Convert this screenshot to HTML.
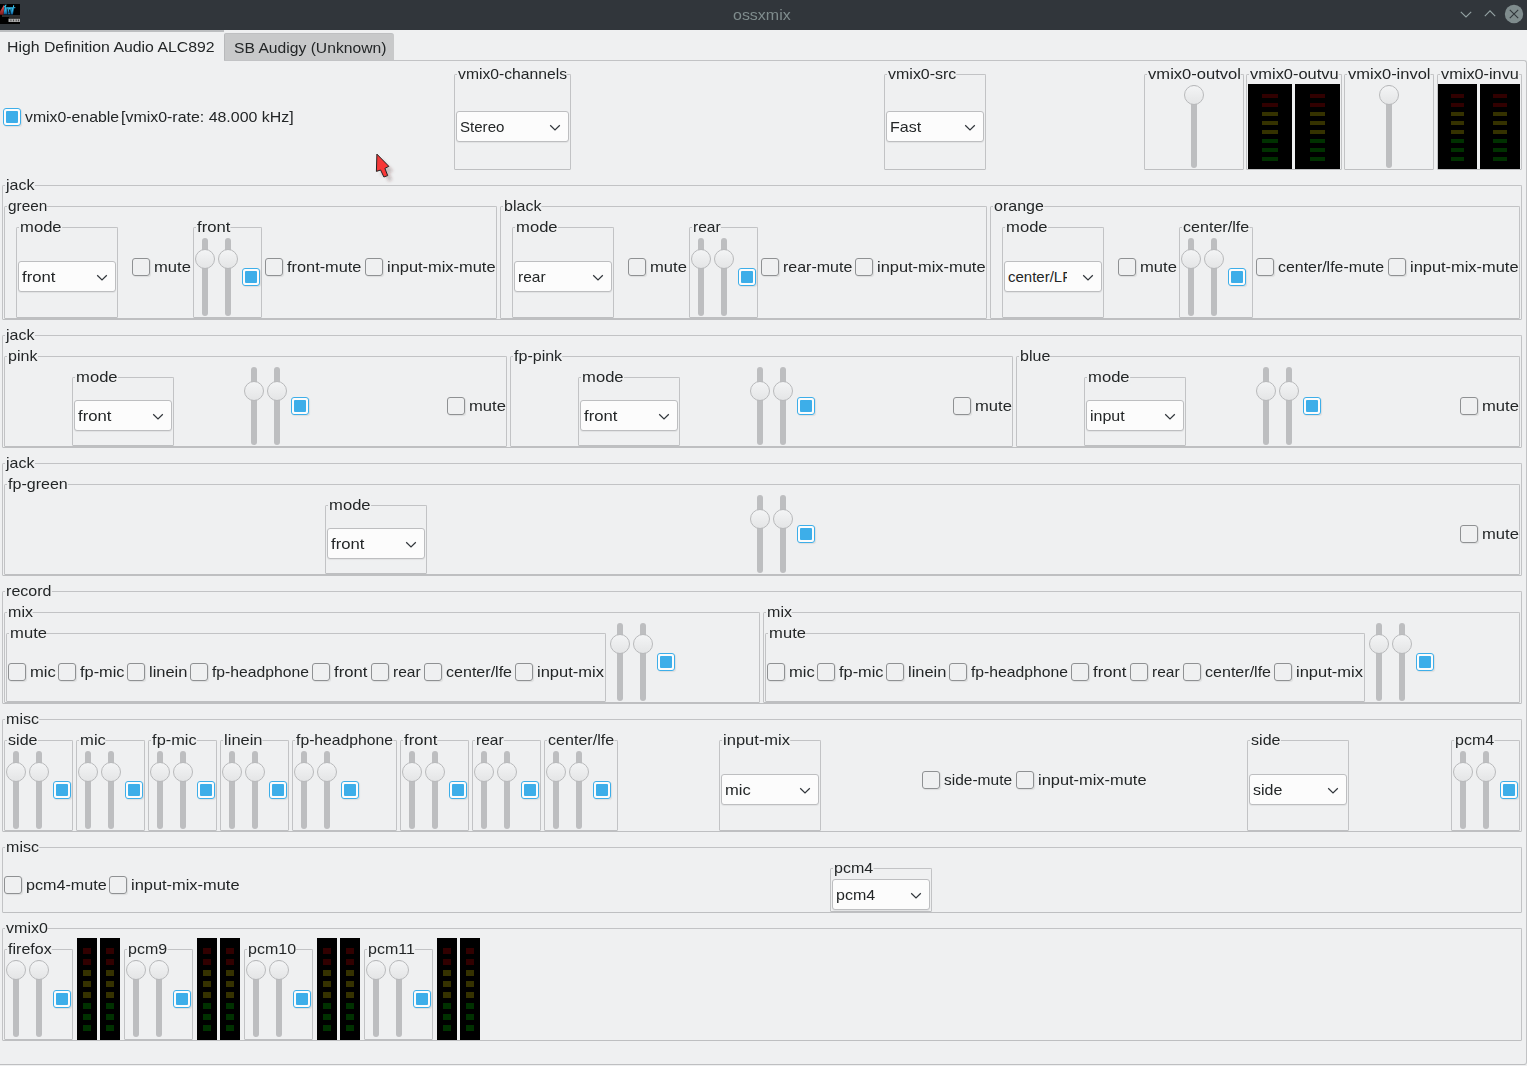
<!DOCTYPE html><html><head><meta charset="utf-8"><style>
*{margin:0;padding:0;box-sizing:border-box}
html,body{width:1527px;height:1066px;overflow:hidden;background:#eff0f1}
body{position:relative;font-family:"Liberation Sans",sans-serif;font-size:16px;color:#232627}
.t,.ft{position:absolute;white-space:nowrap;line-height:16px;height:16px;font-size:15px;transform-origin:0 0}
.ft{background:#eff0f1;padding:0 0 0 1px}
.fr{position:absolute;border:1px solid #c2c3c5;border-bottom-color:#bebfc1;border-radius:1.5px}
.cb{position:absolute;width:18px;height:18px;border:1px solid #8f9193;border-radius:3px;box-shadow:1px 1px 1px rgba(0,0,0,0.08)}
.cbc{position:absolute;width:18px;height:18px;border:1px solid #3daee9;border-radius:3px;background:#fcfcfc;box-shadow:1px 1px 1px rgba(0,0,0,0.08)}
.cbc:after{content:"";position:absolute;left:2px;top:2px;width:12px;height:12px;background:#3daee9;border-radius:1px}
.co{position:absolute;border:1px solid #bdbec0;border-radius:3px;background:#fcfcfc;box-shadow:0 1px 1px rgba(0,0,0,0.06)}
.chev{position:absolute}
.gr{position:absolute;width:6px;background:#bdbec0;border-radius:3px}
.hd{position:absolute;width:20px;height:20px;border-radius:50%;border:1px solid #b9babc;background:linear-gradient(#f3f4f5,#e4e5e6)}
.vu{position:absolute;background:#000}
.vu i{position:absolute;display:block}
</style></head><body><div style="position:absolute;left:0;top:0;width:1527px;height:30px;background:#31363b"></div>
<svg style="position:absolute;left:0;top:4px" width="20" height="20" viewBox="0 0 20 20"><defs><linearGradient id="bl" x1="0" y1="0" x2="0" y2="1"><stop offset="0" stop-color="#3cd0f8"/><stop offset="0.6" stop-color="#2aa8e0"/><stop offset="1" stop-color="#0a4a80"/></linearGradient><linearGradient id="rd" x1="0" y1="0" x2="0" y2="1"><stop offset="0" stop-color="#f06060"/><stop offset="1" stop-color="#801818"/></linearGradient></defs><rect x="0" y="0" width="20" height="20" fill="#000"/><path d="M0 7.5 L4.2 0.4 L3.6 10.8 L0 10.8 Z" fill="url(#rd)"/><g transform="translate(1.6 0) scale(0.74 1) skewX(-10)"><path d="M4.6 10.6 L4.6 3.2 L3.8 3.2 L3.8 1.8 L4.7 1.8 Q5 0.4 6.6 0.5 L6.6 1.9 Q6.1 1.9 6.1 2.5 L6.1 3.2 L7.6 3.2 L7.6 10.6 Z" fill="url(#bl)"/><path d="M7.6 10.6 L7.6 3.2 L15.8 3.2 L15.8 1.2 L17.2 1.2 L17.2 10.6 Z" fill="url(#bl)"/><rect x="8.9" y="4.6" width="0.9" height="6" fill="#000"/><rect x="11.1" y="5.4" width="1.2" height="3.6" fill="#000"/><rect x="13.3" y="4.6" width="0.8" height="6" fill="#000"/><rect x="17.2" y="3.2" width="2" height="1.3" fill="url(#bl)"/></g><rect x="2" y="11.5" width="18" height="1" fill="#5a5a5a"/><rect x="8.5" y="14.6" width="11.5" height="3.4" fill="#a8a8a8"/><rect x="10.6" y="15.5" width="0.7" height="1.8" fill="#222"/><rect x="13.2" y="15.5" width="0.7" height="1.8" fill="#222"/><rect x="15.8" y="15.5" width="0.7" height="1.8" fill="#222"/><rect x="18.2" y="15.5" width="0.7" height="1.8" fill="#222"/><rect x="9" y="13.2" width="11" height="1" fill="#333"/></svg>
<div class="t" style="left:733px;top:7px;transform:scaleX(1.0648);color:#7f8c8d;">ossxmix</div>
<svg style="position:absolute;left:1458px;top:8px" width="16" height="12" viewBox="0 0 16 12"><path d="M2.8 3.9 L8 8.9 L13.2 3.9" fill="none" stroke="#95a3a4" stroke-width="1.1"/></svg>
<svg style="position:absolute;left:1482px;top:7px" width="16" height="12" viewBox="0 0 16 12"><path d="M2.8 9.2 L8 3.9 L13.2 9.2" fill="none" stroke="#95a3a4" stroke-width="1.1"/></svg>
<svg style="position:absolute;left:1504px;top:4px" width="20" height="20" viewBox="0 0 20 20"><circle cx="10" cy="10" r="9.2" fill="#7f8c8d"/><path d="M5.8 5.8 L14.2 14.2 M14.2 5.8 L5.8 14.2" stroke="#31363b" stroke-width="1.1"/></svg>
<div style="position:absolute;left:0;top:30px;width:224px;height:2px;background:#bcbec0"></div>
<div style="position:absolute;left:224px;top:33px;width:170px;height:27px;background:#c8c9ca;border-left:1px solid #b8b9bb;border-top:1px solid #bfc0c2;border-radius:2px 3px 0 0"></div>
<div class="t" style="left:7px;top:39px;transform:scaleX(1.0546);">High Definition Audio ALC892</div>
<div class="t" style="left:234px;top:40px;transform:scaleX(1.0444);">SB Audigy (Unknown)</div>
<div style="position:absolute;left:0;top:60px;width:1527px;height:1005px;border:1px solid #c2c3c5;border-left:0;border-bottom-color:#bebfc1;border-radius:0 3px 3px 0"></div>
<div style="position:absolute;left:0;top:60px;width:224px;height:1px;background:#eff0f1"></div>
<div class="cbc" style="left:3px;top:108px"></div>
<div class="t" style="left:25px;top:109px;transform:scaleX(1.0539);">vmix0-enable</div>
<div class="t" style="left:121px;top:109px;transform:scaleX(1.0621);">[vmix0-rate: 48.000 kHz]</div>
<div class="fr" style="left:454px;top:74px;width:117px;height:96px"></div>
<div class="ft" style="left:457px;top:66px;transform:scaleX(1.0452)">vmix0-channels</div>
<div class="co" style="left:456px;top:111px;width:113px;height:31px"></div>
<div class="t" style="left:460px;top:119px;transform:scaleX(1.0047);">Stereo</div>
<svg class="chev" style="left:549px;top:124px" width="12" height="8" viewBox="0 0 12 8"><path d="M1.2 1.3 L6 6 L10.8 1.3" fill="none" stroke="#31363b" stroke-width="1.25"/></svg>
<div class="fr" style="left:884px;top:74px;width:102px;height:96px"></div>
<div class="ft" style="left:887px;top:66px;transform:scaleX(1.0641)">vmix0-src</div>
<div class="co" style="left:886px;top:111px;width:98px;height:31px"></div>
<div class="t" style="left:890px;top:119px;transform:scaleX(1.0670);">Fast</div>
<svg class="chev" style="left:964px;top:124px" width="12" height="8" viewBox="0 0 12 8"><path d="M1.2 1.3 L6 6 L10.8 1.3" fill="none" stroke="#31363b" stroke-width="1.25"/></svg>
<div class="fr" style="left:1144px;top:74px;width:100px;height:96px"></div>
<div class="ft" style="left:1147px;top:66px;transform:scaleX(1.1024)">vmix0-outvol</div>
<div class="gr" style="left:1191px;top:85px;height:83px"></div>
<div class="hd" style="left:1184px;top:85px"></div>
<div class="fr" style="left:1246px;top:74px;width:96px;height:96px"></div>
<div class="ft" style="left:1249px;top:66px;transform:scaleX(1.0950)">vmix0-outvu</div>
<div class="vu" style="left:1248px;top:84px;width:44px;height:85px">
<i style="left:14px;top:10px;width:16px;height:4px;background:#310000"></i>
<i style="left:14px;top:19px;width:16px;height:4px;background:#310000"></i>
<i style="left:14px;top:28px;width:16px;height:4px;background:#353200"></i>
<i style="left:14px;top:37px;width:16px;height:4px;background:#353200"></i>
<i style="left:14px;top:46px;width:16px;height:4px;background:#353200"></i>
<i style="left:14px;top:55px;width:16px;height:4px;background:#003100"></i>
<i style="left:14px;top:64px;width:16px;height:4px;background:#003100"></i>
<i style="left:14px;top:73px;width:16px;height:4px;background:#003100"></i>
</div>
<div class="vu" style="left:1295px;top:84px;width:45px;height:85px">
<i style="left:15px;top:10px;width:15px;height:4px;background:#310000"></i>
<i style="left:15px;top:19px;width:15px;height:4px;background:#310000"></i>
<i style="left:15px;top:28px;width:15px;height:4px;background:#353200"></i>
<i style="left:15px;top:37px;width:15px;height:4px;background:#353200"></i>
<i style="left:15px;top:46px;width:15px;height:4px;background:#353200"></i>
<i style="left:15px;top:55px;width:15px;height:4px;background:#003100"></i>
<i style="left:15px;top:64px;width:15px;height:4px;background:#003100"></i>
<i style="left:15px;top:73px;width:15px;height:4px;background:#003100"></i>
</div>
<div class="fr" style="left:1344px;top:74px;width:90px;height:96px"></div>
<div class="ft" style="left:1347px;top:66px;transform:scaleX(1.0986)">vmix0-invol</div>
<div class="gr" style="left:1386px;top:85px;height:83px"></div>
<div class="hd" style="left:1379px;top:85px"></div>
<div class="fr" style="left:1437px;top:74px;width:85px;height:96px"></div>
<div class="ft" style="left:1440px;top:66px;transform:scaleX(1.0845)">vmix0-invu</div>
<div class="vu" style="left:1438px;top:84px;width:39px;height:85px">
<i style="left:13px;top:10px;width:13px;height:4px;background:#310000"></i>
<i style="left:13px;top:19px;width:13px;height:4px;background:#310000"></i>
<i style="left:13px;top:28px;width:13px;height:4px;background:#353200"></i>
<i style="left:13px;top:37px;width:13px;height:4px;background:#353200"></i>
<i style="left:13px;top:46px;width:13px;height:4px;background:#353200"></i>
<i style="left:13px;top:55px;width:13px;height:4px;background:#003100"></i>
<i style="left:13px;top:64px;width:13px;height:4px;background:#003100"></i>
<i style="left:13px;top:73px;width:13px;height:4px;background:#003100"></i>
</div>
<div class="vu" style="left:1480px;top:84px;width:40px;height:85px">
<i style="left:13px;top:10px;width:14px;height:4px;background:#310000"></i>
<i style="left:13px;top:19px;width:14px;height:4px;background:#310000"></i>
<i style="left:13px;top:28px;width:14px;height:4px;background:#353200"></i>
<i style="left:13px;top:37px;width:14px;height:4px;background:#353200"></i>
<i style="left:13px;top:46px;width:14px;height:4px;background:#353200"></i>
<i style="left:13px;top:55px;width:14px;height:4px;background:#003100"></i>
<i style="left:13px;top:64px;width:14px;height:4px;background:#003100"></i>
<i style="left:13px;top:73px;width:14px;height:4px;background:#003100"></i>
</div>
<div class="fr" style="left:2px;top:185px;width:1520px;height:135px"></div>
<div class="ft" style="left:5px;top:177px;transform:scaleX(1.0670)">jack</div>
<div class="fr" style="left:4px;top:206px;width:493px;height:113px"></div>
<div class="ft" style="left:7px;top:198px;transform:scaleX(1.0237)">green</div>
<div class="fr" style="left:16px;top:227px;width:102px;height:91px"></div>
<div class="ft" style="left:19px;top:219px;transform:scaleX(1.1056)">mode</div>
<div class="co" style="left:18px;top:261px;width:98px;height:31px"></div>
<div class="t" style="left:22px;top:269px;transform:scaleX(1.1100);">front</div>
<svg class="chev" style="left:96px;top:274px" width="12" height="8" viewBox="0 0 12 8"><path d="M1.2 1.3 L6 6 L10.8 1.3" fill="none" stroke="#31363b" stroke-width="1.25"/></svg>
<div class="cb" style="left:132px;top:258px"></div>
<div class="t" style="left:154px;top:259px;transform:scaleX(1.1062);">mute</div>
<div class="fr" style="left:193px;top:227px;width:69px;height:91px"></div>
<div class="ft" style="left:196px;top:219px;transform:scaleX(1.1100)">front</div>
<div class="gr" style="left:202px;top:238px;height:78px"></div>
<div class="hd" style="left:195px;top:249px"></div>
<div class="gr" style="left:225px;top:238px;height:78px"></div>
<div class="hd" style="left:218px;top:249px"></div>
<div class="cbc" style="left:242px;top:268px"></div>
<div class="cb" style="left:265px;top:258px"></div>
<div class="t" style="left:287px;top:259px;transform:scaleX(1.0882);">front-mute</div>
<div class="cb" style="left:365px;top:258px"></div>
<div class="t" style="left:387px;top:259px;transform:scaleX(1.0939);">input-mix-mute</div>
<div class="fr" style="left:500px;top:206px;width:487px;height:113px"></div>
<div class="ft" style="left:503px;top:198px;transform:scaleX(1.0670)">black</div>
<div class="fr" style="left:512px;top:227px;width:102px;height:91px"></div>
<div class="ft" style="left:515px;top:219px;transform:scaleX(1.1056)">mode</div>
<div class="co" style="left:514px;top:261px;width:98px;height:31px"></div>
<div class="t" style="left:518px;top:269px;transform:scaleX(1.0346);">rear</div>
<svg class="chev" style="left:592px;top:274px" width="12" height="8" viewBox="0 0 12 8"><path d="M1.2 1.3 L6 6 L10.8 1.3" fill="none" stroke="#31363b" stroke-width="1.25"/></svg>
<div class="cb" style="left:628px;top:258px"></div>
<div class="t" style="left:650px;top:259px;transform:scaleX(1.1062);">mute</div>
<div class="fr" style="left:689px;top:227px;width:69px;height:91px"></div>
<div class="ft" style="left:692px;top:219px;transform:scaleX(1.0346)">rear</div>
<div class="gr" style="left:698px;top:238px;height:78px"></div>
<div class="hd" style="left:691px;top:249px"></div>
<div class="gr" style="left:721px;top:238px;height:78px"></div>
<div class="hd" style="left:714px;top:249px"></div>
<div class="cbc" style="left:738px;top:268px"></div>
<div class="cb" style="left:761px;top:258px"></div>
<div class="t" style="left:783px;top:259px;transform:scaleX(1.0656);">rear-mute</div>
<div class="cb" style="left:855px;top:258px"></div>
<div class="t" style="left:877px;top:259px;transform:scaleX(1.0939);">input-mix-mute</div>
<div class="fr" style="left:990px;top:206px;width:530px;height:113px"></div>
<div class="ft" style="left:993px;top:198px;transform:scaleX(1.0670)">orange</div>
<div class="fr" style="left:1002px;top:227px;width:102px;height:91px"></div>
<div class="ft" style="left:1005px;top:219px;transform:scaleX(1.1056)">mode</div>
<div class="co" style="left:1004px;top:261px;width:98px;height:31px"></div>
<div class="t" style="left:1008px;top:269px;transform:scaleX(1.0000);width:59px;overflow:hidden;">center/LF</div>
<svg class="chev" style="left:1082px;top:274px" width="12" height="8" viewBox="0 0 12 8"><path d="M1.2 1.3 L6 6 L10.8 1.3" fill="none" stroke="#31363b" stroke-width="1.25"/></svg>
<div class="cb" style="left:1118px;top:258px"></div>
<div class="t" style="left:1140px;top:259px;transform:scaleX(1.1062);">mute</div>
<div class="fr" style="left:1179px;top:227px;width:74px;height:91px"></div>
<div class="ft" style="left:1182px;top:219px;transform:scaleX(1.0705)">center/lfe</div>
<div class="gr" style="left:1188px;top:238px;height:78px"></div>
<div class="hd" style="left:1181px;top:249px"></div>
<div class="gr" style="left:1211px;top:238px;height:78px"></div>
<div class="hd" style="left:1204px;top:249px"></div>
<div class="cbc" style="left:1228px;top:268px"></div>
<div class="cb" style="left:1256px;top:258px"></div>
<div class="t" style="left:1278px;top:259px;transform:scaleX(1.0600);">center/lfe-mute</div>
<div class="cb" style="left:1388px;top:258px"></div>
<div class="t" style="left:1410px;top:259px;transform:scaleX(1.0939);">input-mix-mute</div>
<div class="fr" style="left:2px;top:335px;width:1520px;height:113px"></div>
<div class="ft" style="left:5px;top:327px;transform:scaleX(1.0670)">jack</div>
<div class="fr" style="left:4px;top:356px;width:503px;height:91px"></div>
<div class="ft" style="left:7px;top:348px;transform:scaleX(1.0670)">pink</div>
<div class="fr" style="left:72px;top:377px;width:102px;height:69px"></div>
<div class="ft" style="left:75px;top:369px;transform:scaleX(1.1056)">mode</div>
<div class="co" style="left:74px;top:400px;width:98px;height:31px"></div>
<div class="t" style="left:78px;top:408px;transform:scaleX(1.1100);">front</div>
<svg class="chev" style="left:152px;top:413px" width="12" height="8" viewBox="0 0 12 8"><path d="M1.2 1.3 L6 6 L10.8 1.3" fill="none" stroke="#31363b" stroke-width="1.25"/></svg>
<div class="gr" style="left:251px;top:367px;height:78px"></div>
<div class="hd" style="left:244px;top:381px"></div>
<div class="gr" style="left:274px;top:367px;height:78px"></div>
<div class="hd" style="left:267px;top:381px"></div>
<div class="cbc" style="left:291px;top:397px"></div>
<div class="cb" style="left:447px;top:397px"></div>
<div class="t" style="left:469px;top:398px;transform:scaleX(1.1062);">mute</div>
<div class="fr" style="left:510px;top:356px;width:503px;height:91px"></div>
<div class="ft" style="left:513px;top:348px;transform:scaleX(1.0670)">fp-pink</div>
<div class="fr" style="left:578px;top:377px;width:102px;height:69px"></div>
<div class="ft" style="left:581px;top:369px;transform:scaleX(1.1056)">mode</div>
<div class="co" style="left:580px;top:400px;width:98px;height:31px"></div>
<div class="t" style="left:584px;top:408px;transform:scaleX(1.1100);">front</div>
<svg class="chev" style="left:658px;top:413px" width="12" height="8" viewBox="0 0 12 8"><path d="M1.2 1.3 L6 6 L10.8 1.3" fill="none" stroke="#31363b" stroke-width="1.25"/></svg>
<div class="gr" style="left:757px;top:367px;height:78px"></div>
<div class="hd" style="left:750px;top:381px"></div>
<div class="gr" style="left:780px;top:367px;height:78px"></div>
<div class="hd" style="left:773px;top:381px"></div>
<div class="cbc" style="left:797px;top:397px"></div>
<div class="cb" style="left:953px;top:397px"></div>
<div class="t" style="left:975px;top:398px;transform:scaleX(1.1062);">mute</div>
<div class="fr" style="left:1016px;top:356px;width:504px;height:91px"></div>
<div class="ft" style="left:1019px;top:348px;transform:scaleX(1.0670)">blue</div>
<div class="fr" style="left:1084px;top:377px;width:102px;height:69px"></div>
<div class="ft" style="left:1087px;top:369px;transform:scaleX(1.1056)">mode</div>
<div class="co" style="left:1086px;top:400px;width:98px;height:31px"></div>
<div class="t" style="left:1090px;top:408px;transform:scaleX(1.0670);">input</div>
<svg class="chev" style="left:1164px;top:413px" width="12" height="8" viewBox="0 0 12 8"><path d="M1.2 1.3 L6 6 L10.8 1.3" fill="none" stroke="#31363b" stroke-width="1.25"/></svg>
<div class="gr" style="left:1263px;top:367px;height:78px"></div>
<div class="hd" style="left:1256px;top:381px"></div>
<div class="gr" style="left:1286px;top:367px;height:78px"></div>
<div class="hd" style="left:1279px;top:381px"></div>
<div class="cbc" style="left:1303px;top:397px"></div>
<div class="cb" style="left:1460px;top:397px"></div>
<div class="t" style="left:1482px;top:398px;transform:scaleX(1.1062);">mute</div>
<div class="fr" style="left:2px;top:463px;width:1520px;height:113px"></div>
<div class="ft" style="left:5px;top:455px;transform:scaleX(1.0670)">jack</div>
<div class="fr" style="left:4px;top:484px;width:1516px;height:91px"></div>
<div class="ft" style="left:7px;top:476px;transform:scaleX(1.0670)">fp-green</div>
<div class="fr" style="left:325px;top:505px;width:102px;height:69px"></div>
<div class="ft" style="left:328px;top:497px;transform:scaleX(1.1056)">mode</div>
<div class="co" style="left:327px;top:528px;width:98px;height:31px"></div>
<div class="t" style="left:331px;top:536px;transform:scaleX(1.1100);">front</div>
<svg class="chev" style="left:405px;top:541px" width="12" height="8" viewBox="0 0 12 8"><path d="M1.2 1.3 L6 6 L10.8 1.3" fill="none" stroke="#31363b" stroke-width="1.25"/></svg>
<div class="gr" style="left:757px;top:495px;height:78px"></div>
<div class="hd" style="left:750px;top:509px"></div>
<div class="gr" style="left:780px;top:495px;height:78px"></div>
<div class="hd" style="left:773px;top:509px"></div>
<div class="cbc" style="left:797px;top:525px"></div>
<div class="cb" style="left:1460px;top:525px"></div>
<div class="t" style="left:1482px;top:526px;transform:scaleX(1.1062);">mute</div>
<div class="fr" style="left:2px;top:591px;width:1520px;height:113px"></div>
<div class="ft" style="left:5px;top:583px;transform:scaleX(1.0670)">record</div>
<div class="fr" style="left:4px;top:612px;width:756px;height:91px"></div>
<div class="ft" style="left:7px;top:604px;transform:scaleX(1.0670)">mix</div>
<div class="fr" style="left:6px;top:633px;width:600px;height:69px"></div>
<div class="ft" style="left:9px;top:625px;transform:scaleX(1.1062)">mute</div>
<div class="cb" style="left:8px;top:663px"></div>
<div class="t" style="left:30px;top:664px;transform:scaleX(1.1045);">mic</div>
<div class="cb" style="left:58px;top:663px"></div>
<div class="t" style="left:80px;top:664px;transform:scaleX(1.0900);">fp-mic</div>
<div class="cb" style="left:127px;top:663px"></div>
<div class="t" style="left:149px;top:664px;transform:scaleX(1.0971);">linein</div>
<div class="cb" style="left:190px;top:663px"></div>
<div class="t" style="left:212px;top:664px;transform:scaleX(1.0467);">fp-headphone</div>
<div class="cb" style="left:312px;top:663px"></div>
<div class="t" style="left:334px;top:664px;transform:scaleX(1.1100);">front</div>
<div class="cb" style="left:371px;top:663px"></div>
<div class="t" style="left:393px;top:664px;transform:scaleX(1.0346);">rear</div>
<div class="cb" style="left:424px;top:663px"></div>
<div class="t" style="left:446px;top:664px;transform:scaleX(1.0705);">center/lfe</div>
<div class="cb" style="left:515px;top:663px"></div>
<div class="t" style="left:537px;top:664px;transform:scaleX(1.1000);">input-mix</div>
<div class="gr" style="left:617px;top:623px;height:78px"></div>
<div class="hd" style="left:610px;top:634px"></div>
<div class="gr" style="left:640px;top:623px;height:78px"></div>
<div class="hd" style="left:633px;top:634px"></div>
<div class="cbc" style="left:657px;top:653px"></div>
<div class="fr" style="left:763px;top:612px;width:757px;height:91px"></div>
<div class="ft" style="left:766px;top:604px;transform:scaleX(1.0670)">mix</div>
<div class="fr" style="left:765px;top:633px;width:600px;height:69px"></div>
<div class="ft" style="left:768px;top:625px;transform:scaleX(1.1062)">mute</div>
<div class="cb" style="left:767px;top:663px"></div>
<div class="t" style="left:789px;top:664px;transform:scaleX(1.1045);">mic</div>
<div class="cb" style="left:817px;top:663px"></div>
<div class="t" style="left:839px;top:664px;transform:scaleX(1.0900);">fp-mic</div>
<div class="cb" style="left:886px;top:663px"></div>
<div class="t" style="left:908px;top:664px;transform:scaleX(1.0971);">linein</div>
<div class="cb" style="left:949px;top:663px"></div>
<div class="t" style="left:971px;top:664px;transform:scaleX(1.0467);">fp-headphone</div>
<div class="cb" style="left:1071px;top:663px"></div>
<div class="t" style="left:1093px;top:664px;transform:scaleX(1.1100);">front</div>
<div class="cb" style="left:1130px;top:663px"></div>
<div class="t" style="left:1152px;top:664px;transform:scaleX(1.0346);">rear</div>
<div class="cb" style="left:1183px;top:663px"></div>
<div class="t" style="left:1205px;top:664px;transform:scaleX(1.0705);">center/lfe</div>
<div class="cb" style="left:1274px;top:663px"></div>
<div class="t" style="left:1296px;top:664px;transform:scaleX(1.1000);">input-mix</div>
<div class="gr" style="left:1376px;top:623px;height:78px"></div>
<div class="hd" style="left:1369px;top:634px"></div>
<div class="gr" style="left:1399px;top:623px;height:78px"></div>
<div class="hd" style="left:1392px;top:634px"></div>
<div class="cbc" style="left:1416px;top:653px"></div>
<div class="fr" style="left:2px;top:719px;width:1520px;height:113px"></div>
<div class="ft" style="left:5px;top:711px;transform:scaleX(1.0670)">misc</div>
<div class="fr" style="left:4px;top:740px;width:69px;height:91px"></div>
<div class="ft" style="left:7px;top:732px;transform:scaleX(1.0670)">side</div>
<div class="gr" style="left:13px;top:751px;height:78px"></div>
<div class="hd" style="left:6px;top:762px"></div>
<div class="gr" style="left:36px;top:751px;height:78px"></div>
<div class="hd" style="left:29px;top:762px"></div>
<div class="cbc" style="left:53px;top:781px"></div>
<div class="fr" style="left:76px;top:740px;width:69px;height:91px"></div>
<div class="ft" style="left:79px;top:732px;transform:scaleX(1.1045)">mic</div>
<div class="gr" style="left:85px;top:751px;height:78px"></div>
<div class="hd" style="left:78px;top:762px"></div>
<div class="gr" style="left:108px;top:751px;height:78px"></div>
<div class="hd" style="left:101px;top:762px"></div>
<div class="cbc" style="left:125px;top:781px"></div>
<div class="fr" style="left:148px;top:740px;width:69px;height:91px"></div>
<div class="ft" style="left:151px;top:732px;transform:scaleX(1.0900)">fp-mic</div>
<div class="gr" style="left:157px;top:751px;height:78px"></div>
<div class="hd" style="left:150px;top:762px"></div>
<div class="gr" style="left:180px;top:751px;height:78px"></div>
<div class="hd" style="left:173px;top:762px"></div>
<div class="cbc" style="left:197px;top:781px"></div>
<div class="fr" style="left:220px;top:740px;width:69px;height:91px"></div>
<div class="ft" style="left:223px;top:732px;transform:scaleX(1.0971)">linein</div>
<div class="gr" style="left:229px;top:751px;height:78px"></div>
<div class="hd" style="left:222px;top:762px"></div>
<div class="gr" style="left:252px;top:751px;height:78px"></div>
<div class="hd" style="left:245px;top:762px"></div>
<div class="cbc" style="left:269px;top:781px"></div>
<div class="fr" style="left:292px;top:740px;width:105px;height:91px"></div>
<div class="ft" style="left:295px;top:732px;transform:scaleX(1.0467)">fp-headphone</div>
<div class="gr" style="left:301px;top:751px;height:78px"></div>
<div class="hd" style="left:294px;top:762px"></div>
<div class="gr" style="left:324px;top:751px;height:78px"></div>
<div class="hd" style="left:317px;top:762px"></div>
<div class="cbc" style="left:341px;top:781px"></div>
<div class="fr" style="left:400px;top:740px;width:69px;height:91px"></div>
<div class="ft" style="left:403px;top:732px;transform:scaleX(1.1100)">front</div>
<div class="gr" style="left:409px;top:751px;height:78px"></div>
<div class="hd" style="left:402px;top:762px"></div>
<div class="gr" style="left:432px;top:751px;height:78px"></div>
<div class="hd" style="left:425px;top:762px"></div>
<div class="cbc" style="left:449px;top:781px"></div>
<div class="fr" style="left:472px;top:740px;width:69px;height:91px"></div>
<div class="ft" style="left:475px;top:732px;transform:scaleX(1.0346)">rear</div>
<div class="gr" style="left:481px;top:751px;height:78px"></div>
<div class="hd" style="left:474px;top:762px"></div>
<div class="gr" style="left:504px;top:751px;height:78px"></div>
<div class="hd" style="left:497px;top:762px"></div>
<div class="cbc" style="left:521px;top:781px"></div>
<div class="fr" style="left:544px;top:740px;width:74px;height:91px"></div>
<div class="ft" style="left:547px;top:732px;transform:scaleX(1.0705)">center/lfe</div>
<div class="gr" style="left:553px;top:751px;height:78px"></div>
<div class="hd" style="left:546px;top:762px"></div>
<div class="gr" style="left:576px;top:751px;height:78px"></div>
<div class="hd" style="left:569px;top:762px"></div>
<div class="cbc" style="left:593px;top:781px"></div>
<div class="fr" style="left:1451px;top:740px;width:69px;height:91px"></div>
<div class="ft" style="left:1454px;top:732px;transform:scaleX(1.0670)">pcm4</div>
<div class="gr" style="left:1460px;top:751px;height:78px"></div>
<div class="hd" style="left:1453px;top:762px"></div>
<div class="gr" style="left:1483px;top:751px;height:78px"></div>
<div class="hd" style="left:1476px;top:762px"></div>
<div class="cbc" style="left:1500px;top:781px"></div>
<div class="fr" style="left:719px;top:740px;width:102px;height:91px"></div>
<div class="ft" style="left:722px;top:732px;transform:scaleX(1.1000)">input-mix</div>
<div class="co" style="left:721px;top:774px;width:98px;height:31px"></div>
<div class="t" style="left:725px;top:782px;transform:scaleX(1.1045);">mic</div>
<svg class="chev" style="left:799px;top:787px" width="12" height="8" viewBox="0 0 12 8"><path d="M1.2 1.3 L6 6 L10.8 1.3" fill="none" stroke="#31363b" stroke-width="1.25"/></svg>
<div class="cb" style="left:922px;top:771px"></div>
<div class="t" style="left:944px;top:772px;transform:scaleX(1.0333);">side-mute</div>
<div class="cb" style="left:1016px;top:771px"></div>
<div class="t" style="left:1038px;top:772px;transform:scaleX(1.0939);">input-mix-mute</div>
<div class="fr" style="left:1247px;top:740px;width:102px;height:91px"></div>
<div class="ft" style="left:1250px;top:732px;transform:scaleX(1.0670)">side</div>
<div class="co" style="left:1249px;top:774px;width:98px;height:31px"></div>
<div class="t" style="left:1253px;top:782px;transform:scaleX(1.0670);">side</div>
<svg class="chev" style="left:1327px;top:787px" width="12" height="8" viewBox="0 0 12 8"><path d="M1.2 1.3 L6 6 L10.8 1.3" fill="none" stroke="#31363b" stroke-width="1.25"/></svg>
<div class="fr" style="left:2px;top:847px;width:1520px;height:66px"></div>
<div class="ft" style="left:5px;top:839px;transform:scaleX(1.0670)">misc</div>
<div class="cb" style="left:4px;top:876px"></div>
<div class="t" style="left:26px;top:877px;transform:scaleX(1.0757);">pcm4-mute</div>
<div class="cb" style="left:109px;top:876px"></div>
<div class="t" style="left:131px;top:877px;transform:scaleX(1.0939);">input-mix-mute</div>
<div class="fr" style="left:830px;top:868px;width:102px;height:44px"></div>
<div class="ft" style="left:833px;top:860px;transform:scaleX(1.0670)">pcm4</div>
<div class="co" style="left:832px;top:879px;width:98px;height:31px"></div>
<div class="t" style="left:836px;top:887px;transform:scaleX(1.0670);">pcm4</div>
<svg class="chev" style="left:910px;top:892px" width="12" height="8" viewBox="0 0 12 8"><path d="M1.2 1.3 L6 6 L10.8 1.3" fill="none" stroke="#31363b" stroke-width="1.25"/></svg>
<div class="fr" style="left:2px;top:928px;width:1520px;height:113px"></div>
<div class="ft" style="left:5px;top:920px;transform:scaleX(1.0670)">vmix0</div>
<div class="fr" style="left:4px;top:949px;width:69px;height:91px"></div>
<div class="ft" style="left:7px;top:941px;transform:scaleX(1.0670)">firefox</div>
<div class="gr" style="left:13px;top:960px;height:77px"></div>
<div class="hd" style="left:6px;top:960px"></div>
<div class="gr" style="left:36px;top:960px;height:77px"></div>
<div class="hd" style="left:29px;top:960px"></div>
<div class="cbc" style="left:53px;top:990px"></div>
<div class="vu" style="left:77px;top:938px;width:20px;height:102px">
<i style="left:6px;top:10px;width:8px;height:6px;background:#310000"></i>
<i style="left:6px;top:21px;width:8px;height:6px;background:#310000"></i>
<i style="left:6px;top:32px;width:8px;height:6px;background:#353200"></i>
<i style="left:6px;top:43px;width:8px;height:6px;background:#353200"></i>
<i style="left:6px;top:54px;width:8px;height:6px;background:#353200"></i>
<i style="left:6px;top:65px;width:8px;height:6px;background:#003100"></i>
<i style="left:6px;top:76px;width:8px;height:6px;background:#003100"></i>
<i style="left:6px;top:87px;width:8px;height:6px;background:#003100"></i>
</div>
<div class="vu" style="left:100px;top:938px;width:20px;height:102px">
<i style="left:6px;top:10px;width:8px;height:6px;background:#310000"></i>
<i style="left:6px;top:21px;width:8px;height:6px;background:#310000"></i>
<i style="left:6px;top:32px;width:8px;height:6px;background:#353200"></i>
<i style="left:6px;top:43px;width:8px;height:6px;background:#353200"></i>
<i style="left:6px;top:54px;width:8px;height:6px;background:#353200"></i>
<i style="left:6px;top:65px;width:8px;height:6px;background:#003100"></i>
<i style="left:6px;top:76px;width:8px;height:6px;background:#003100"></i>
<i style="left:6px;top:87px;width:8px;height:6px;background:#003100"></i>
</div>
<div class="fr" style="left:124px;top:949px;width:69px;height:91px"></div>
<div class="ft" style="left:127px;top:941px;transform:scaleX(1.0670)">pcm9</div>
<div class="gr" style="left:133px;top:960px;height:77px"></div>
<div class="hd" style="left:126px;top:960px"></div>
<div class="gr" style="left:156px;top:960px;height:77px"></div>
<div class="hd" style="left:149px;top:960px"></div>
<div class="cbc" style="left:173px;top:990px"></div>
<div class="vu" style="left:197px;top:938px;width:20px;height:102px">
<i style="left:6px;top:10px;width:8px;height:6px;background:#310000"></i>
<i style="left:6px;top:21px;width:8px;height:6px;background:#310000"></i>
<i style="left:6px;top:32px;width:8px;height:6px;background:#353200"></i>
<i style="left:6px;top:43px;width:8px;height:6px;background:#353200"></i>
<i style="left:6px;top:54px;width:8px;height:6px;background:#353200"></i>
<i style="left:6px;top:65px;width:8px;height:6px;background:#003100"></i>
<i style="left:6px;top:76px;width:8px;height:6px;background:#003100"></i>
<i style="left:6px;top:87px;width:8px;height:6px;background:#003100"></i>
</div>
<div class="vu" style="left:220px;top:938px;width:20px;height:102px">
<i style="left:6px;top:10px;width:8px;height:6px;background:#310000"></i>
<i style="left:6px;top:21px;width:8px;height:6px;background:#310000"></i>
<i style="left:6px;top:32px;width:8px;height:6px;background:#353200"></i>
<i style="left:6px;top:43px;width:8px;height:6px;background:#353200"></i>
<i style="left:6px;top:54px;width:8px;height:6px;background:#353200"></i>
<i style="left:6px;top:65px;width:8px;height:6px;background:#003100"></i>
<i style="left:6px;top:76px;width:8px;height:6px;background:#003100"></i>
<i style="left:6px;top:87px;width:8px;height:6px;background:#003100"></i>
</div>
<div class="fr" style="left:244px;top:949px;width:69px;height:91px"></div>
<div class="ft" style="left:247px;top:941px;transform:scaleX(1.0670)">pcm10</div>
<div class="gr" style="left:253px;top:960px;height:77px"></div>
<div class="hd" style="left:246px;top:960px"></div>
<div class="gr" style="left:276px;top:960px;height:77px"></div>
<div class="hd" style="left:269px;top:960px"></div>
<div class="cbc" style="left:293px;top:990px"></div>
<div class="vu" style="left:317px;top:938px;width:20px;height:102px">
<i style="left:6px;top:10px;width:8px;height:6px;background:#310000"></i>
<i style="left:6px;top:21px;width:8px;height:6px;background:#310000"></i>
<i style="left:6px;top:32px;width:8px;height:6px;background:#353200"></i>
<i style="left:6px;top:43px;width:8px;height:6px;background:#353200"></i>
<i style="left:6px;top:54px;width:8px;height:6px;background:#353200"></i>
<i style="left:6px;top:65px;width:8px;height:6px;background:#003100"></i>
<i style="left:6px;top:76px;width:8px;height:6px;background:#003100"></i>
<i style="left:6px;top:87px;width:8px;height:6px;background:#003100"></i>
</div>
<div class="vu" style="left:340px;top:938px;width:20px;height:102px">
<i style="left:6px;top:10px;width:8px;height:6px;background:#310000"></i>
<i style="left:6px;top:21px;width:8px;height:6px;background:#310000"></i>
<i style="left:6px;top:32px;width:8px;height:6px;background:#353200"></i>
<i style="left:6px;top:43px;width:8px;height:6px;background:#353200"></i>
<i style="left:6px;top:54px;width:8px;height:6px;background:#353200"></i>
<i style="left:6px;top:65px;width:8px;height:6px;background:#003100"></i>
<i style="left:6px;top:76px;width:8px;height:6px;background:#003100"></i>
<i style="left:6px;top:87px;width:8px;height:6px;background:#003100"></i>
</div>
<div class="fr" style="left:364px;top:949px;width:69px;height:91px"></div>
<div class="ft" style="left:367px;top:941px;transform:scaleX(1.0670)">pcm11</div>
<div class="gr" style="left:373px;top:960px;height:77px"></div>
<div class="hd" style="left:366px;top:960px"></div>
<div class="gr" style="left:396px;top:960px;height:77px"></div>
<div class="hd" style="left:389px;top:960px"></div>
<div class="cbc" style="left:413px;top:990px"></div>
<div class="vu" style="left:437px;top:938px;width:20px;height:102px">
<i style="left:6px;top:10px;width:8px;height:6px;background:#310000"></i>
<i style="left:6px;top:21px;width:8px;height:6px;background:#310000"></i>
<i style="left:6px;top:32px;width:8px;height:6px;background:#353200"></i>
<i style="left:6px;top:43px;width:8px;height:6px;background:#353200"></i>
<i style="left:6px;top:54px;width:8px;height:6px;background:#353200"></i>
<i style="left:6px;top:65px;width:8px;height:6px;background:#003100"></i>
<i style="left:6px;top:76px;width:8px;height:6px;background:#003100"></i>
<i style="left:6px;top:87px;width:8px;height:6px;background:#003100"></i>
</div>
<div class="vu" style="left:460px;top:938px;width:20px;height:102px">
<i style="left:6px;top:10px;width:8px;height:6px;background:#310000"></i>
<i style="left:6px;top:21px;width:8px;height:6px;background:#310000"></i>
<i style="left:6px;top:32px;width:8px;height:6px;background:#353200"></i>
<i style="left:6px;top:43px;width:8px;height:6px;background:#353200"></i>
<i style="left:6px;top:54px;width:8px;height:6px;background:#353200"></i>
<i style="left:6px;top:65px;width:8px;height:6px;background:#003100"></i>
<i style="left:6px;top:76px;width:8px;height:6px;background:#003100"></i>
<i style="left:6px;top:87px;width:8px;height:6px;background:#003100"></i>
</div>
<svg style="position:absolute;left:370px;top:148px" width="30" height="36" viewBox="0 0 30 36"><defs><filter id="sh" x="-50%" y="-50%" width="200%" height="200%"><feGaussianBlur stdDeviation="1.8"/></filter><linearGradient id="cg" x1="0" y1="0" x2="1" y2="0"><stop offset="0" stop-color="#f03a3a"/><stop offset="1" stop-color="#ff3333"/></linearGradient></defs><path d="M6.9 6.1 L6.4 23.4 L10.6 22 L13.9 29 L17.7 27.6 L14.9 20.4 L18.8 18.3 Z" transform="translate(4.5 4.5)" fill="rgba(80,40,40,0.25)" filter="url(#sh)"/><path d="M6.9 6.1 L6.4 23.4 L10.6 22 L13.9 29 L17.7 27.6 L14.9 20.4 L18.8 18.3 Z" fill="url(#cg)" stroke="#232323" stroke-width="1" stroke-linejoin="round"/></svg></body></html>
